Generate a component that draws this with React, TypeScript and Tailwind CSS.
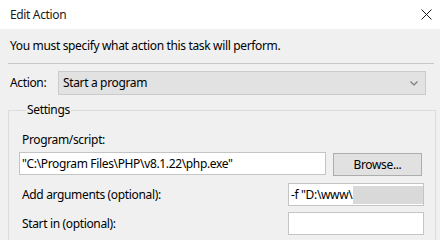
import React from 'react';

function CloseIcon() {
  return (
    <svg width="11" height="11" viewBox="0 0 11 11" className="text-[#1a1a1a]">
      <path d="M0.5 0.5 L10.5 10.5 M10.5 0.5 L0.5 10.5" stroke="currentColor" strokeWidth="1" fill="none" />
    </svg>
  );
}

function Chevron() {
  return (
    <svg width="8" height="5" viewBox="0 0 8 5" className="text-[#7a7a7a]">
      <path d="M0.5 0.5 L4 4 L7.5 0.5" stroke="currentColor" strokeWidth="1.2" fill="none" />
    </svg>
  );
}

type FieldRowProps = {
  label: string;
  value?: string;
  redacted?: boolean;
};

function FieldRow({ label, value, redacted }: FieldRowProps) {
  return (
    <div className="flex items-center justify-between h-[23px]">
      <span className="pl-[3px]">{label}</span>
      <div className="w-[136px] h-[23px] mr-[11px] bg-white border border-[#c4c4c4] flex items-center pl-[2px] overflow-hidden whitespace-nowrap">
        {value && <span>{value}</span>}
        {redacted && <span className="ml-[1px] h-[18px] w-[70px] bg-[#d9d9d9]" />}
      </div>
    </div>
  );
}

export default function App() {
  return (
    <div className="w-[440px] h-[240px] overflow-hidden bg-[#f0f0f0] text-[12px] leading-[16px] tracking-[-0.35px] text-black font-['Noto_Sans','Open_Sans',sans-serif]">
      <div className="h-[29px] bg-white flex items-center justify-between pl-[10px] pr-[8px]">
        <span className="text-[#1a1a1a]">Edit Action</span>
        <CloseIcon />
      </div>

      <div className="px-[8px]">
        <p className="pt-[9px] pl-[2px]">You must specify what action this task will perform.</p>
        <div className="mt-[9px] h-[1px] bg-[#c8c8c8] mr-[-2px]" />

        <div className="mt-[7px] flex items-center h-[24px]">
          <span className="w-[50px] pl-[2px]">Action:</span>
          <div className="flex-1 mr-[6px] h-[24px] bg-[#e2e2e2] border border-[#cbcbcb] flex items-center justify-between pl-[4px] pr-[7px]">
            <span>Start a program</span>
            <Chevron />
          </div>
        </div>

        <fieldset className="mt-[7px] border border-[#dcdcdc] mr-[-4px] pl-[10px] pb-[8px]">
          <legend className="ml-[7px] px-[1px]">Settings</legend>
          <div className="pt-[14px] pl-[3px]">Program/script:</div>
          <div className="mt-[4px] flex items-start gap-[7px]">
            <div className="w-[307px] h-[23px] bg-white border border-[#c4c4c4] flex items-center pl-[2px] whitespace-nowrap overflow-hidden">
              "C:\Program Files\PHP\v8.1.22\php.exe"
            </div>
            <button type="button" className="mt-[1px] w-[89px] h-[23px] bg-[#e1e1e1] border border-[#adadad] flex items-center justify-center">
              Browse...
            </button>
          </div>
          <div className="mt-[7px] flex flex-col gap-[6px]">
            <FieldRow label="Add arguments (optional):" value={'-f "D:\\www\\'} redacted />
            <FieldRow label="Start in (optional):" />
          </div>
        </fieldset>
      </div>
    </div>
  );
}
